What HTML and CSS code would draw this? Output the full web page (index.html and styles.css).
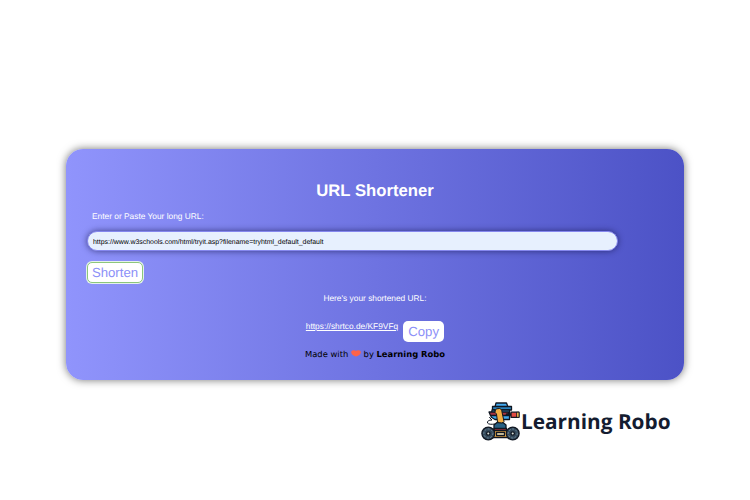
FILE: index.html
```html
<!DOCTYPE html>
<html lang="en">
<head>
<meta charset="utf-8">
<title>URL Shortener</title>
<link rel="stylesheet" href="styles.css">
</head>
<body>
<main class="card">
  <h1 class="title">URL Shortener</h1>
  <label class="label" for="url">Enter or Paste Your long URL:</label>
  <input class="field" id="url" type="text" value="https://www.w3schools.com/html/tryit.asp?filename=tryhtml_default_default">
  <button class="btn shorten">Shorten</button>
  <p class="result-label">Here's your shortened URL:</p>
  <div class="result"><a class="link" href="#">https://shrtco.de/KF9VFq</a><button class="btn copy">Copy</button></div>
  <p class="credit">Made with <svg class="heart" viewBox="0 0 10 7"><path d="M5 6.500C3 6 .2 4.500 .2 2.200C.2 .1 3.500 -.1 5 .8C6.500 -.1 9.800 .1 9.800 2.200C9.800 4.500 7 6 5 6.500Z" fill="#ff6347"/></svg> by <b>Learning Robo</b></p>
</main>
<footer class="brand">
  <svg class="robot" viewBox="0 0 39 39" stroke="#101722" stroke-width="1.300" stroke-linejoin="round" stroke-linecap="round">
    <path d="M8.500 15.500L11 18Q6 18 6.500 21Q8 23 14 22" fill="#fff" stroke-width="1"/>
    <path d="M15 1H25.500L27 5H14Z" fill="#43aaf0"/>
    <path d="M11.500 4.500H30.500V8H11.500Z" fill="#2a82bd"/>
    <path d="M11 8H28.500V17.500H14L10 15Z" fill="#41a9ee"/>
    <path d="M8 10H27.500V13.500H9.500Z" fill="#a9333f"/>
    <path d="M26 12.500H31" stroke-width="2.500"/>
    <path d="M30 10.200H38V15.300H30Z" fill="#e34b43"/>
    <path d="M36 10.200H38V15.300H36Z" fill="#f6bd4c" stroke-width=".8"/>
    <path d="M13 27V23L16 20.500H22L25 23V27Z" fill="#276083"/>
    <path d="M14 8.500Q14.500 6 18.500 6.500Q21.500 7 21 10L23 19.500Q21.500 22 16.500 20L15.500 12Q13.500 11 14 8.500Z" fill="#f3ae43" stroke-width="1"/>
    <path d="M13 26.500H25.500V29H13Z" fill="#bd3440"/>
    <path d="M11 28.500H28V35.500H11Z" fill="#f3ae43"/>
    <path d="M15.500 30.500H23.500V33.500H15.500Z" fill="#fff1bf"/>
    <g fill="#34495a"><circle cx="7.300" cy="31.500" r="6.400"/><circle cx="31.700" cy="31.500" r="6.400"/></g>
    <g fill="none" stroke="#6d8799" stroke-width="1" stroke-dasharray="1.200 2.200"><circle cx="7.300" cy="31.500" r="4.500"/><circle cx="31.700" cy="31.500" r="4.500"/></g>
    <g fill="#d9dfd8"><circle cx="7.300" cy="31.500" r="1.700"/><circle cx="31.700" cy="31.500" r="1.700"/></g>
  </svg><span class="brand-name">Learning Robo</span>
</footer>
</body>
</html>
```
FILE: styles.css
```css
* { box-sizing: border-box; }
body {
  margin: 0;
  padding: 149px 66px 0;
  height: 500px;
  overflow: hidden;
  background: #fff;
  font-family: "Liberation Sans", Arial, sans-serif;
  text-rendering: geometricPrecision;
}
.card {
  height: 231px;
  padding: 31px 20px 0;
  border-radius: 17px;
  background: linear-gradient(to right, #9094fc, #4c52c6);
  box-shadow: 0 0 9px rgba(0, 0, 0, .55);
  color: #fff;
}
.title { margin: 0; font-size: 16.7px; line-height: 22px; text-align: center; }
.label { display: block; margin: 8px 0 0 6px; font-size: 8.35px; line-height: 12px; }
.field {
  display: block;
  width: 531px;
  height: 20px;
  margin: 9px 0 0 1px;
  padding: 2px 5px 0;
  border: 1px solid #8587ee;
  border-radius: 10px;
  background: #e7f0fe;
  box-shadow: 0 0 6px rgba(20, 20, 70, .65);
  color: #000;
  font: 6.95px/16px "Liberation Sans", Arial, sans-serif;
  text-rendering: geometricPrecision;
}
.btn {
  display: block;
  padding: 0;
  border: 0;
  border-radius: 5px;
  background: #fff;
  color: #8c90f8;
  font: 13.2px/20px "Liberation Sans", Arial, sans-serif;
  text-rendering: geometricPrecision;
}
.shorten {
  width: 56px;
  height: 21px;
  margin: 11px 0 0 1px;
  border: 1px solid #8cc67c;
  line-height: 19px;
  box-shadow: 0 0 0 1px #e4f0ec;
}
.result-label { margin: 9px 0 0; font-size: 8.35px; line-height: 12px; text-align: center; }
.result { display: flex; justify-content: center; gap: 5px; margin-top: 17px; }
.link { color: #fff; font-size: 8.35px; line-height: 11px; }
.copy { width: 41px; height: 21px; }
.credit {
  margin: 6px 0 0;
  color: #000;
  font-family: "DejaVu Sans", Verdana, sans-serif;
  font-size: 8.4px;
  line-height: 12px;
  text-align: center;
  white-space: nowrap;
}
.heart { width: 10px; height: 7px; }
.brand { display: flex; align-items: center; height: 40px; margin: 22px 0 0 415px; }
.robot { flex: none; width: 39px; height: 39px; margin-top: -1px; }
.brand-name { margin-left: 1px; color: #141c30; font: 700 20.8px/28px "Open Sans", sans-serif; white-space: nowrap; }
```
